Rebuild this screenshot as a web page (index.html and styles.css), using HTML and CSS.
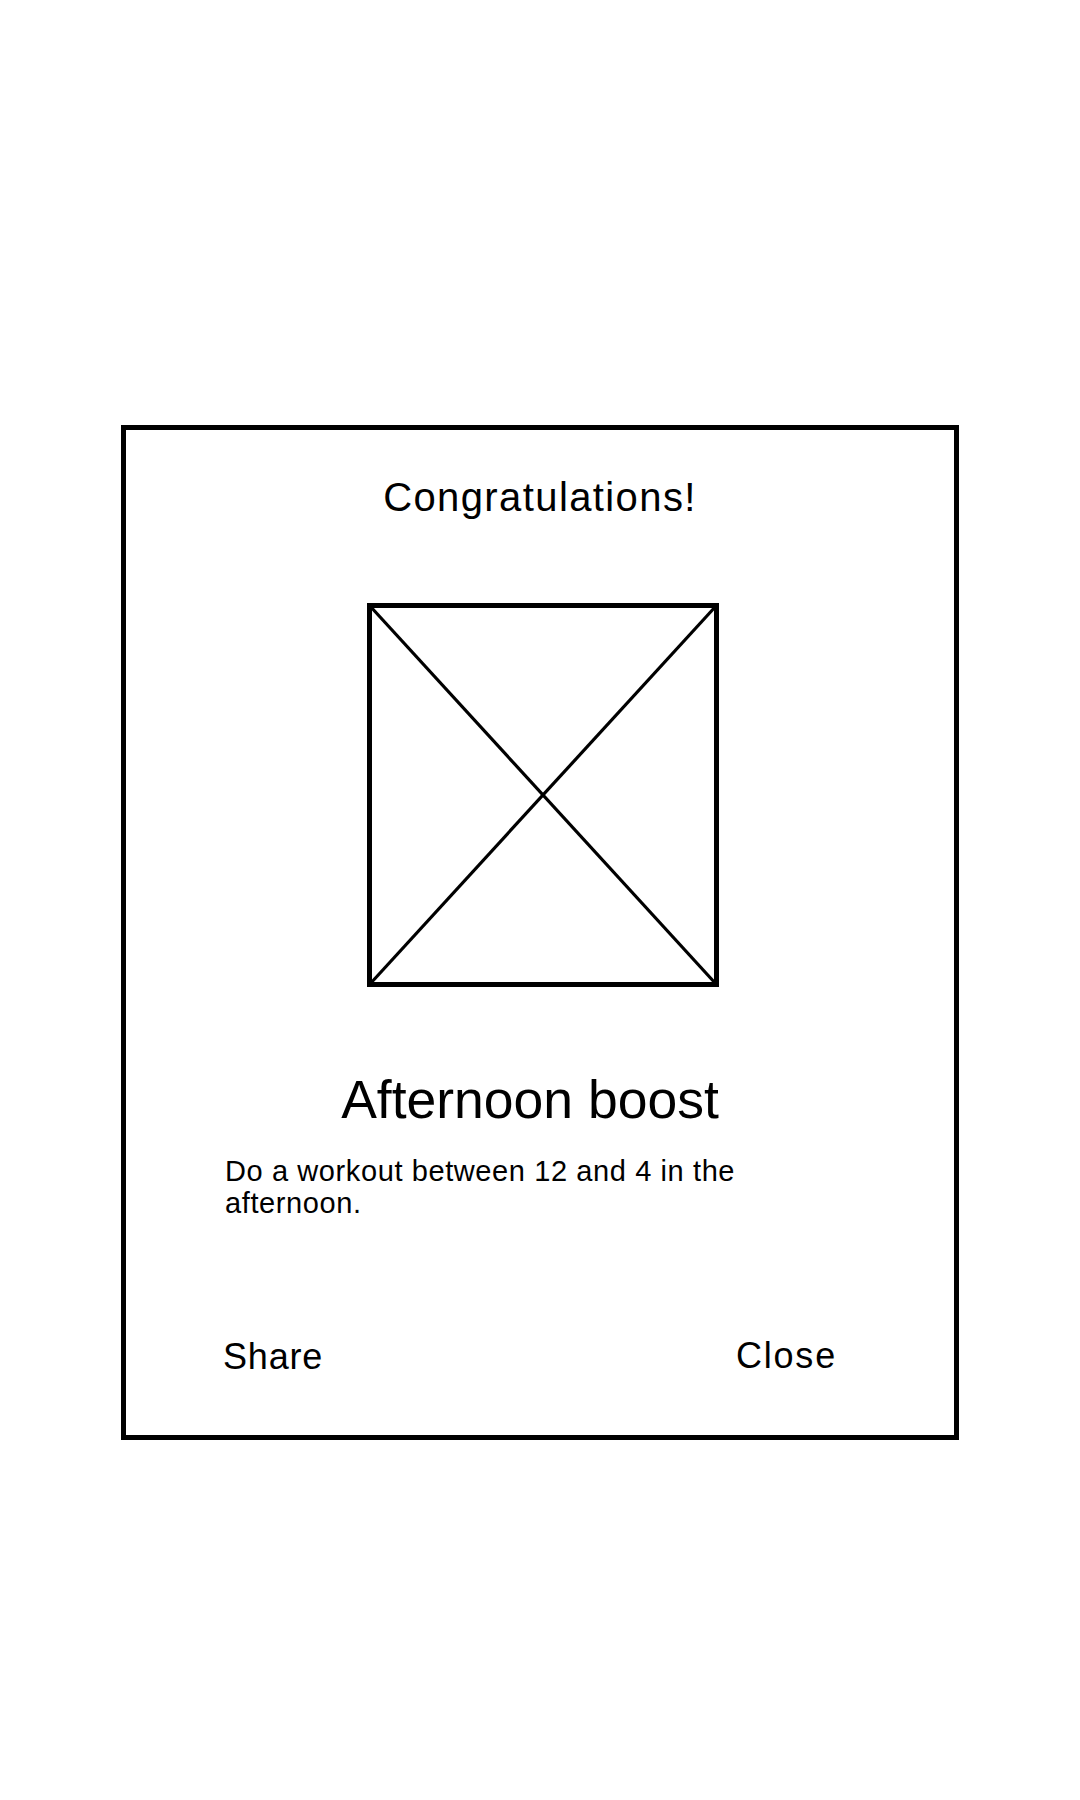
FILE: index.html
```html
<!DOCTYPE html>
<html lang="en">
<head>
<meta charset="utf-8">
<title>Congratulations</title>
<link rel="stylesheet" href="styles.css">
</head>
<body>
<div class="dialog">
  <h1 class="title">Congratulations!</h1>
  <svg class="badge" width="352" height="384" viewBox="0 0 352 384" aria-hidden="true">
    <rect x="2.5" y="2.5" width="347" height="379" fill="none" stroke="#000" stroke-width="5"/>
    <line x1="3" y1="3" x2="349" y2="381" stroke="#000" stroke-width="3.2"/>
    <line x1="349" y1="3" x2="3" y2="381" stroke="#000" stroke-width="3.2"/>
  </svg>
  <h2 class="name">Afternoon boost</h2>
  <p class="desc">Do a workout between 12 and 4 in the<br>afternoon.</p>
  <div class="actions">
    <span class="btn share">Share</span>
    <span class="btn close">Close</span>
  </div>
</div>
</body>
</html>
```

FILE: styles.css
```css
html, body {
  margin: 0;
  padding: 0;
  background: #fff;
}
body {
  font-family: "Liberation Sans", Arial, sans-serif;
  color: #000;
  width: 1080px;
  height: 1800px;
}
.dialog {
  box-sizing: border-box;
  margin: 425px 0 0 121px;
  width: 838px;
  height: 1015px;
  border: 5px solid #000;
  display: flex;
  flex-direction: column;
  align-items: center;
  padding-top: 44px;
}
.title {
  margin: 0;
  font-weight: normal;
  font-size: 40px;
  line-height: 46px;
  letter-spacing: 1.4px;
}
.badge {
  display: block;
  margin: 83px 0 0 6px;
}
.name {
  margin: 82px 20px 0 0;
  font-weight: normal;
  font-size: 53.5px;
  line-height: 61px;
}
.desc {
  align-self: stretch;
  margin: 25px 0 0;
  padding-left: 99px;
  font-size: 29px;
  line-height: 32px;
  letter-spacing: 0.6px;
}
.actions {
  align-self: stretch;
  display: flex;
  justify-content: space-between;
  align-items: flex-start;
  margin-top: 117px;
  padding: 0 117px 0 97px;
}
.btn {
  font-size: 36px;
  line-height: 41px;
  letter-spacing: 0.8px;
}
.close {
  margin-top: -1px;
  letter-spacing: 1.8px;
}
```
